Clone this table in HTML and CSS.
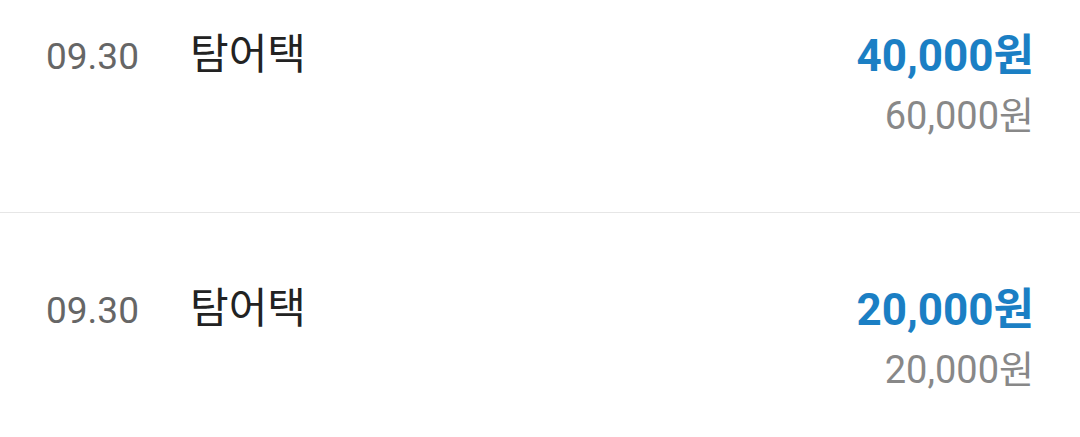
FILE: index.html
```
<!DOCTYPE html>
<html lang="ko">
<head>
  <meta charset="UTF-8">
  <meta name="viewport" content="width=device-width, initial-scale=1.0">
  <title>이용 내역</title>
  <link rel="stylesheet" href="styles.css">
</head>
<body>
  <ul class="history">
    <li class="entry">
      <span class="entry-date">09.30</span>
      <span class="entry-name">탐어택</span>
      <div class="entry-amount">
        <div class="paid">40,000원</div>
        <div class="price">60,000원</div>
      </div>
    </li>
    <li class="entry">
      <span class="entry-date">09.30</span>
      <span class="entry-name">탐어택</span>
      <div class="entry-amount">
        <div class="paid">20,000원</div>
        <div class="price">20,000원</div>
      </div>
    </li>
  </ul>
</body>
</html>
```

FILE: styles.css
```
* { margin: 0; padding: 0; box-sizing: border-box; }
html, body { width: 100%; height: 100%; background: #fff; overflow: hidden; font-family: Roboto, "Noto Sans CJK KR", sans-serif; }
.history { list-style: none; margin-top: -41px; }
.entry { display: flex; align-items: flex-start; padding: 76px 46px 75px 46px; border-bottom: 1px solid #e6e6e6; }
.entry-date { width: 144px; font-size: 37px; line-height: 1.2; color: #666; }
.entry-name { flex: 1; font-size: 42px; line-height: 1.2; color: #222; margin-top: -5px; }
.entry-amount { text-align: right; }
.paid { font-size: 44px; font-weight: bold; line-height: 1.2; color: #1b7fc4; margin-top: -5px; }
.price { font-size: 38px; line-height: 1.2; color: #888; margin-top: 11px; margin-bottom: -2px; }
```
